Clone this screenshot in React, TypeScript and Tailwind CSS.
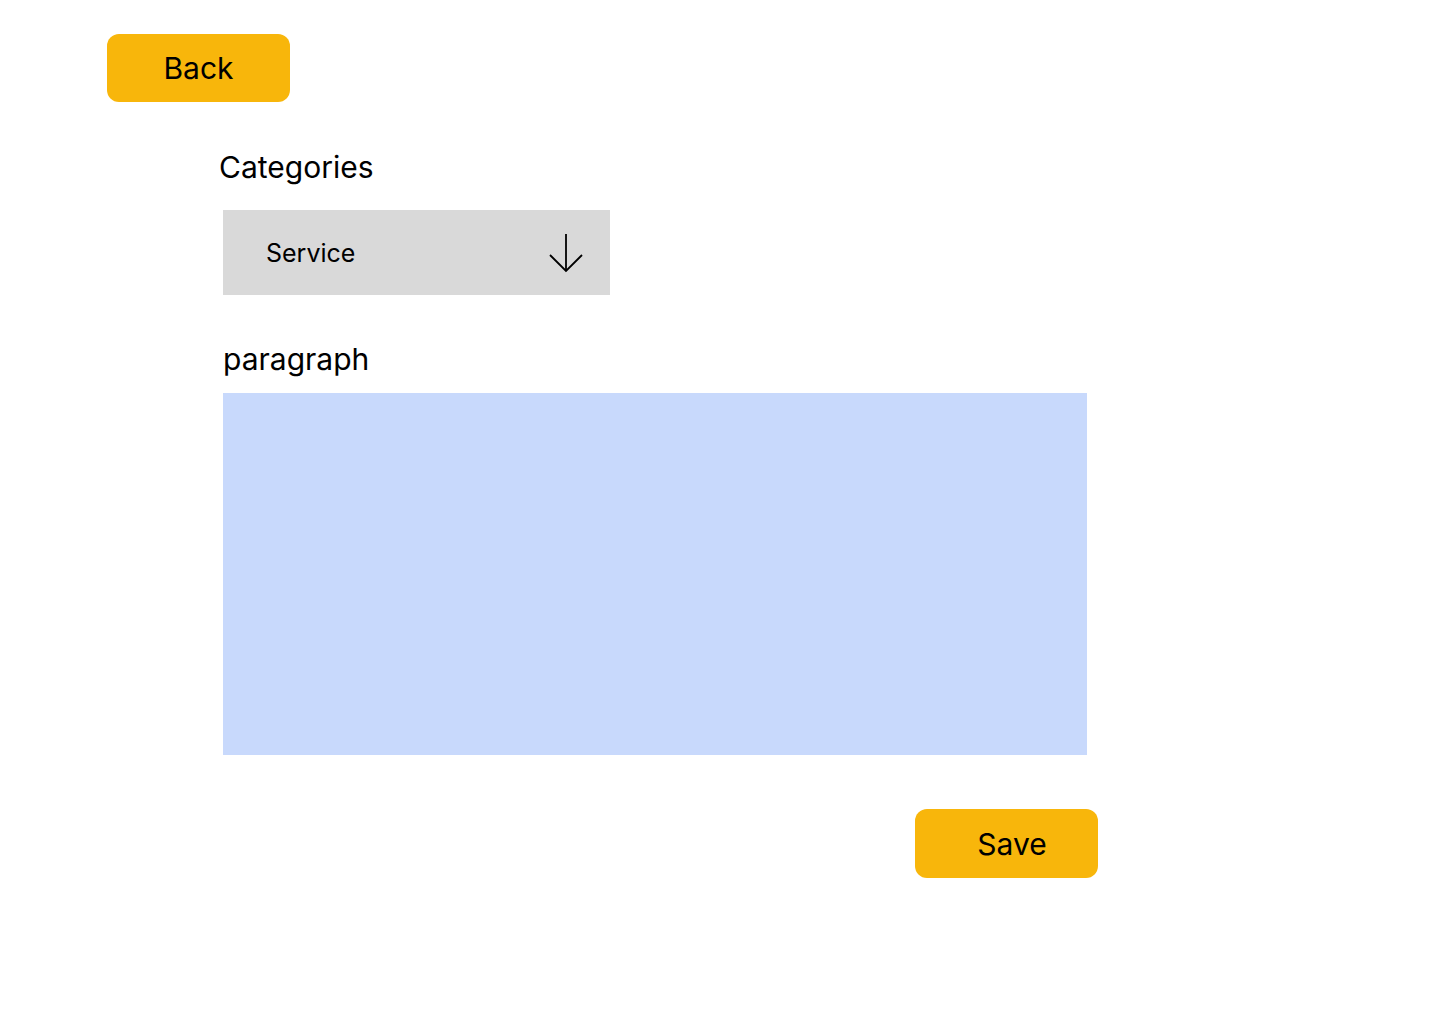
import React from "react";

export default function App() {
  return (
    <div className="w-[1440px] h-[1024px] bg-white relative" style={{ fontFamily: "Inter, 'Noto Sans', sans-serif" }}>
      <div className="pl-[107px] pt-[34px]">
        <button className="w-[183px] h-[68px] rounded-[12px] bg-[#F8B60B] text-black text-[30px] leading-[36px] flex items-center justify-center">
          Back
        </button>
      </div>
      <div className="pl-[219px] mt-[47px]">
        <div className="text-[30px] leading-[36px] text-black">Categories</div>
      </div>
      <div className="pl-[223px] mt-[25px]">
        <div className="w-[387px] h-[85px] bg-[#D9D9D9] flex items-center justify-between pl-[43px] pr-[27px]">
          <span className="text-[25px] leading-[30px] text-black">Service</span>
          <svg width="34" height="40" viewBox="0 0 34 40" fill="none" stroke="black" strokeWidth="1.8">
            <path d="M17 1 V38" />
            <path d="M1 22 L17 38 L33 22" />
          </svg>
        </div>
      </div>
      <div className="pl-[223px] mt-[46px]">
        <div className="text-[30px] leading-[36px] text-black">paragraph</div>
      </div>
      <div className="pl-[223px] mt-[16px]">
        <div className="w-[864px] h-[362px] bg-[#C8D9FC]" />
      </div>
      <div className="pl-[915px] mt-[54px]">
        <button className="w-[183px] h-[69px] rounded-[12px] bg-[#F8B60B] text-black text-[30px] leading-[36px] flex items-center justify-center pl-[11px]">
          Save
        </button>
      </div>
    </div>
  );
}
